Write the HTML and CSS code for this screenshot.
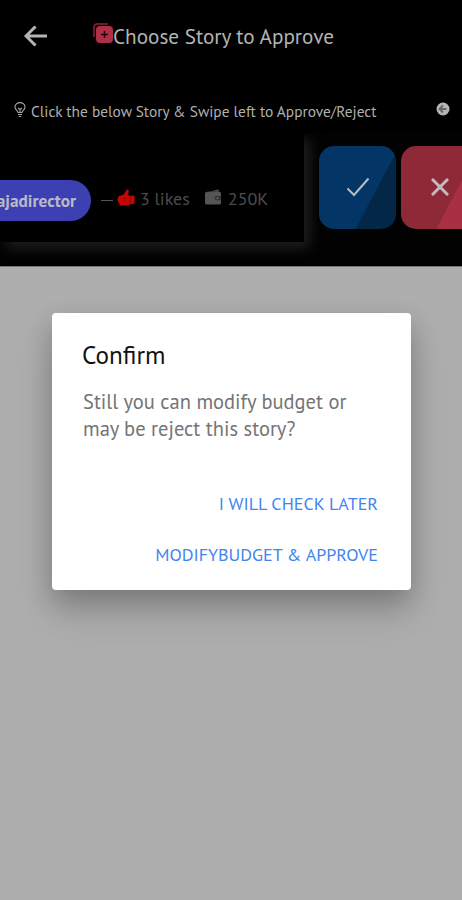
FILE: index.html
```html
<!DOCTYPE html>
<html lang="en">
  <head>
    <meta charset="UTF-8" />
    <meta name="viewport" content="width=device-width, initial-scale=1.0" />
    <title>Choose Story to Approve</title>
    <link rel="stylesheet" href="styles.css">
  </head>
  <body>
    <header class="toolbar">
      <svg class="back" viewBox="0 0 24 22" fill="none" stroke="#b4b4b4" stroke-width="3">
        <path d="M23 11H2.500M11.500 1.500L2 11l9.500 9.500" />
      </svg>
      <svg class="add-icon" viewBox="0 0 20 20">
        <path d="M1 14V4a3 3 0 0 1 3-3h11" fill="none" stroke="#8d2436" stroke-width="1.500" />
        <rect x="3" y="3" width="17" height="17" rx="4" fill="#ae3047" />
        <path d="M11.500 8v7M8 11.500h7" stroke="#180409" stroke-width="1.500" />
      </svg>
      <h1 class="title">Choose Story to Approve</h1>
    </header>

    <div class="tip">
      <svg class="bulb" viewBox="0 0 12 16" fill="none" stroke="#a5a5a5" stroke-width="1.100">
        <path d="M4 10.500C3.700 8.500 1 8 1 5a5 4.400 0 0 1 10 0c0 3-2.700 3.500-3 5.500z" />
        <path d="M4 6l2 1.500L8 6M6 7.500v3M4 12.500h4M4.700 14.500h2.600" />
      </svg>
      <p class="tip-text">Click the below Story &amp; Swipe left to Approve/Reject</p>
      <svg class="swipe-icon" viewBox="0 0 14 14">
        <circle cx="7" cy="7" r="6.500" fill="#b5b5b5" />
        <path d="M10.500 7H4M7 3.500L3.500 7 7 10.500" fill="none" stroke="#666" stroke-width="1.900" />
      </svg>
    </div>

    <div class="story-row">
      <div class="story">
        <span class="chip">ajadirector</span>
        <span class="dash"></span>
        <svg class="thumb" viewBox="0 0 18 17">
          <path d="M17.500 6.500v8l-4 .8-2 1.200H4.500c-1.500 0-1.800-1-1.800-1.800C1.500 14 1 13.300 1.200 12.300.2 11.500.2 10 1 9.300c0-1.500.7-2.300 2-2.500l3.500-1L9.800.6c1.600-.5 2.300.7 2 2L11 6l2.500 1z" fill="#c60505" />
          <path d="M6 9.500h3M5.500 12h3.500M13.200 7v8.300" fill="none" stroke="#8c0505" stroke-width=".8" />
        </svg>
        <span class="likes">3 likes</span>
        <svg class="wallet" viewBox="0 0 18 16" fill="#555">
          <path d="M2 3L14 0l1 2.200H2zM2 2.500h13A2 2 0 0 1 17 4.500v9.500a2 2 0 0 1-2 2H2a2 2 0 0 1-2-2v-9.500a2 2 0 0 1 2-2z" />
          <path d="M17 7h-4.500a2 2 0 0 0 0 4.500H17z" fill="#333" />
          <circle cx="13.300" cy="9.200" r="1" fill="#777" />
        </svg>
        <span class="budget">250K</span>
      </div>
      <button class="action approve" aria-label="Approve">
        <svg class="check" viewBox="0 0 24 20" fill="none" stroke="#b9bcc4" stroke-width="2">
          <path d="M1.500 11.500l6.500 6.500L22.500 1.500" />
        </svg>
      </button>
      <button class="action reject" aria-label="Reject">
        <svg class="cross" viewBox="0 0 18 18" fill="none" stroke="#c5babb" stroke-width="3">
          <path d="M1 1l16 16M17 1L1 17" />
        </svg>
      </button>
    </div>

    <main class="page">
      <div class="dialog" role="dialog">
        <h2 class="dialog-title">Confirm</h2>
        <p class="dialog-message">Still you can modify budget or<br />may be reject this story?</p>
        <div class="dialog-actions">
          <button class="link later">I WILL CHECK LATER</button>
          <button class="link modify">MODIFYBUDGET &amp; APPROVE</button>
        </div>
      </div>
    </main>
  </body>
</html>
```
FILE: styles.css
```css
* {
  box-sizing: border-box;
  font-family: "PT Sans", "Noto Sans CJK SC", "Noto Sans", sans-serif;
}

body {
  display: flex;
  flex-direction: column;
  height: 900px;
  margin: 0;
  overflow: hidden;
  background-color: #000;
}

svg {
  display: block;
  flex-shrink: 0;
}

h1,
h2,
p {
  margin: 0;
  font-weight: normal;
  white-space: nowrap;
}

button {
  padding: 0;
  border: 0;
  background: none;
}

.toolbar {
  display: flex;
  align-items: center;
  height: 72px;
  padding-left: 24px;
}

.back {
  width: 24px;
  height: 22px;
}

.add-icon {
  width: 20px;
  height: 20px;
  margin: 0 0 7px 45px;
}

.title {
  font-size: 21.2px;
  line-height: 30px;
  color: #b4b4b4;
}

.tip {
  display: flex;
  align-items: center;
  height: 61px;
  padding: 17px 12px 0 14px;
}

.bulb {
  width: 12px;
  height: 16px;
  margin-bottom: 3px;
}

.tip-text {
  margin-left: 5px;
  padding-bottom: 1px;
  font-size: 15.4px;
  line-height: 20px;
  color: #b0b0b0;
}

.swipe-icon {
  width: 14px;
  height: 14px;
  margin: 0 0 5px auto;
}

.story-row {
  display: flex;
  height: 133px;
  background-color: #020202;
  overflow: hidden;
}

.story {
  display: flex;
  flex-shrink: 0;
  align-items: center;
  width: 304px;
  height: 109px;
  padding-top: 26px;
  background-color: #000;
  box-shadow: 6px 6px 12px #1f1f1f;
  color: #4c4c4c;
  font-size: 18px;
  line-height: 24px;
}

.chip {
  display: flex;
  justify-content: flex-end;
  align-items: center;
  width: 91px;
  height: 41px;
  padding-right: 15px;
  border-radius: 0 21px 21px 0;
  background-color: #3c40b3;
  color: #b8b9c6;
  font-size: 17.3px;
  font-weight: bold;
}

.dash {
  width: 12px;
  height: 1px;
  margin-left: 10px;
  background-color: #555;
}

.thumb {
  width: 18px;
  height: 17px;
  margin: 0 5px 7px 4px;
}

.likes,
.budget {
  padding-bottom: 3px;
}

.wallet {
  width: 17px;
  height: 16px;
  margin: 0 6px 8px 15px;
}

.action {
  display: flex;
  flex-shrink: 0;
  align-items: center;
  justify-content: center;
  width: 77px;
  height: 83px;
  margin-top: 13px;
  border-radius: 15px;
}

.approve {
  margin-left: 15px;
  background: linear-gradient(118deg, #043567 66%, #032746 67%);
}

.reject {
  margin-left: 5px;
  background: linear-gradient(118deg, #8e2938 65%, #a83043 66%);
}

.check {
  width: 24px;
  height: 20px;
  margin-bottom: 2px;
}

.cross {
  width: 18px;
  height: 18px;
  margin-bottom: 1px;
}

.page {
  flex: 1;
  padding: 46px 51px 0 52px;
  border-top: 1px solid #777;
  background-color: #aeaeae;
}

.dialog {
  height: 277px;
  padding: 27px 33px 0 30px;
  border-radius: 4px;
  background-color: #fff;
  box-shadow: 0 22px 38px rgba(0, 0, 0, 0.18), 0 9px 24px rgba(0, 0, 0, 0.17);
}

.dialog-title {
  font-size: 25.2px;
  line-height: 30px;
  color: #111;
}

.dialog-message {
  margin: 18px 0 0 1px;
  font-size: 20.5px;
  line-height: 27px;
  color: #747474;
}

.dialog-actions {
  display: flex;
  flex-direction: column;
  align-items: flex-end;
  gap: 27px;
  margin-top: 50px;
}

.link {
  font-size: 18px;
  line-height: 24px;
  color: #4285ee;
  white-space: nowrap;
}
```
